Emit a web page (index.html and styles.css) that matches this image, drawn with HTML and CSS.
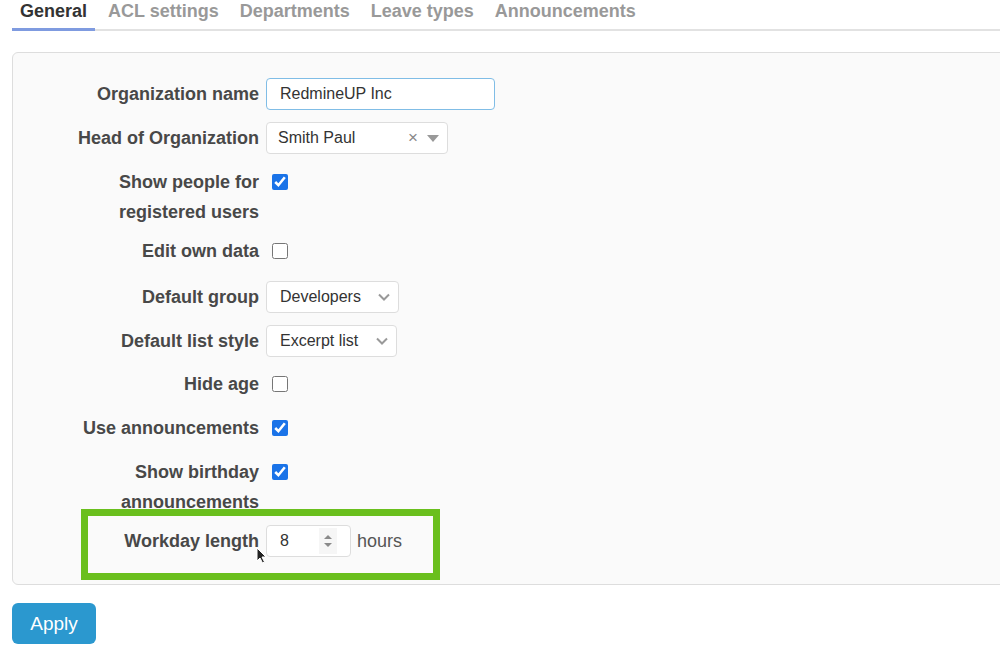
FILE: index.html
```html
<!DOCTYPE html>
<html lang="en">
<head>
  <meta charset="UTF-8">
  <title>People settings</title>
  <link rel="stylesheet" href="styles.css">
</head>
<body>
  <nav class="tabs">
    <a href="#" class="tab active">General</a>
    <a href="#" class="tab">ACL settings</a>
    <a href="#" class="tab">Departments</a>
    <a href="#" class="tab">Leave types</a>
    <a href="#" class="tab">Announcements</a>
  </nav>

  <form class="settings">
    <div class="box">
      <div class="row">
        <label class="lbl">Organization name</label>
        <input class="text focus" type="text" value="RedmineUP Inc">
      </div>
      <div class="row">
        <label class="lbl">Head of Organization</label>
        <div class="select2">
          <span class="val">Smith Paul</span>
          <span class="clear">×</span>
          <span class="tri"></span>
        </div>
      </div>
      <div class="row">
        <label class="lbl two">Show people for<br>registered users</label>
        <input class="check" type="checkbox" checked>
      </div>
      <div class="row">
        <label class="lbl">Edit own data</label>
        <input class="check" type="checkbox">
      </div>
      <div class="row sel-first">
        <label class="lbl">Default group</label>
        <div class="select w-group">
          <span class="val">Developers</span>
          <svg class="chev" width="12" height="8" viewBox="0 0 12 8"><path d="M1 1.5l5 5 5-5" fill="none" stroke="#999" stroke-width="2"/></svg>
        </div>
      </div>
      <div class="row">
        <label class="lbl">Default list style</label>
        <div class="select w-list">
          <span class="val">Excerpt list</span>
          <svg class="chev" width="12" height="8" viewBox="0 0 12 8"><path d="M1 1.5l5 5 5-5" fill="none" stroke="#999" stroke-width="2"/></svg>
        </div>
      </div>
      <div class="row sel-after">
        <label class="lbl">Hide age</label>
        <input class="check" type="checkbox">
      </div>
      <div class="row">
        <label class="lbl">Use announcements</label>
        <input class="check" type="checkbox" checked>
      </div>
      <div class="row">
        <label class="lbl two">Show birthday<br>announcements</label>
        <input class="check" type="checkbox" checked>
      </div>
      <div class="row workday">
        <label class="lbl">Workday length</label>
        <div class="num">
          <span class="val">8</span>
          <span class="spin">
            <svg width="10" height="18" viewBox="0 0 10 18"><path d="M1 7l4-4 4 4z M1 11l4 4 4-4z" fill="#8a8a8a"/></svg>
          </span>
        </div>
        <span class="unit">hours</span>
        <span class="highlight"></span>
        <svg class="cursor" width="12" height="18" viewBox="0 0 12 18"><path d="M1 1v13l3-3 2.5 5 2-1-2.5-5h4z" fill="#222" stroke="#fff" stroke-width="1"/></svg>
      </div>
    </div>

    <button type="button" class="apply">Apply</button>
  </form>
</body>
</html>
```

FILE: styles.css
```css
* { box-sizing: border-box; }
body {
  margin: 0; padding: 0 0 0 12px; overflow: hidden;
  font-family: "Liberation Sans", Arial, sans-serif; color: #444; background: #fff;
}

/* tabs */
.tabs {
  display: flex; gap: 5px; height: 31px;
  border-bottom: 2px solid #e2e2e2;
}
.tab {
  padding: 0 8px; font-size: 18px; font-weight: bold; line-height: 22px;
  color: #999; text-decoration: none; margin-bottom: -2px;
}
.tab.active { color: #333; border-bottom: 3px solid #7f9be0; }

/* settings box */
.box {
  margin: 21px -20px 0 0; padding: 19px 0 21px;
  background: #fafafa; border: 1px solid #ddd; border-radius: 6px;
}
.row { display: flex; align-items: flex-start; padding: 7px 0; position: relative; }
.row.sel-first { padding-top: 9px; }
.row.sel-after { padding-top: 6px; }
.lbl {
  width: 253px; padding-right: 7px; text-align: right;
  font-size: 18px; font-weight: bold; line-height: 30px; color: #484848;
}
.lbl.two { margin-bottom: -5px; }
.text, .select, .select2, .num {
  height: 32px; margin: -1px 0; background: #fff;
  border: 1px solid #ddd; border-radius: 4px;
  font: 16px "Liberation Sans", Arial, sans-serif; color: #333;
}
.text { padding: 0 13px; outline: none; }
.text.focus { width: 229px; border-color: #80bde6; }
.select, .select2, .num { display: flex; align-items: center; padding: 0 13px; }
.select .val, .select2 .val, .num .val { flex: 1; }
.w-group { width: 133px; }
.w-list { width: 131px; }
.chev { margin-right: -5px; }
.select2 { width: 182px; padding-left: 11px; }
.clear { color: #888; font-size: 17px; margin-right: 9px; }
.tri {
  width: 0; height: 0; margin-right: -5px;
  border-left: 6px solid transparent; border-right: 6px solid transparent;
  border-top: 7px solid #999;
}
.num { width: 85px; padding-right: 13px; }
.spin {
  display: flex; align-items: center; justify-content: center;
  width: 18px; height: 26px; background: #f6f6f6;
}
.check {
  width: 16px; height: 16px; margin: 7px 0 0 6px;
  accent-color: #1a73e8;
}
.unit { font-size: 18px; line-height: 30px; margin-left: 6px; color: #555; }

/* annotation over the workday row */
.highlight {
  position: absolute; left: 68px; top: -10px; width: 359px; height: 71px;
  border: 7px solid #6abf1d;
}
.cursor { position: absolute; left: 243px; top: 28px; }

.apply {
  margin-top: 18px; width: 84px; height: 41px;
  background: #2b98cf; color: #fff; border: none; border-radius: 6px;
  font: 19px "Liberation Sans", Arial, sans-serif;
}
```
